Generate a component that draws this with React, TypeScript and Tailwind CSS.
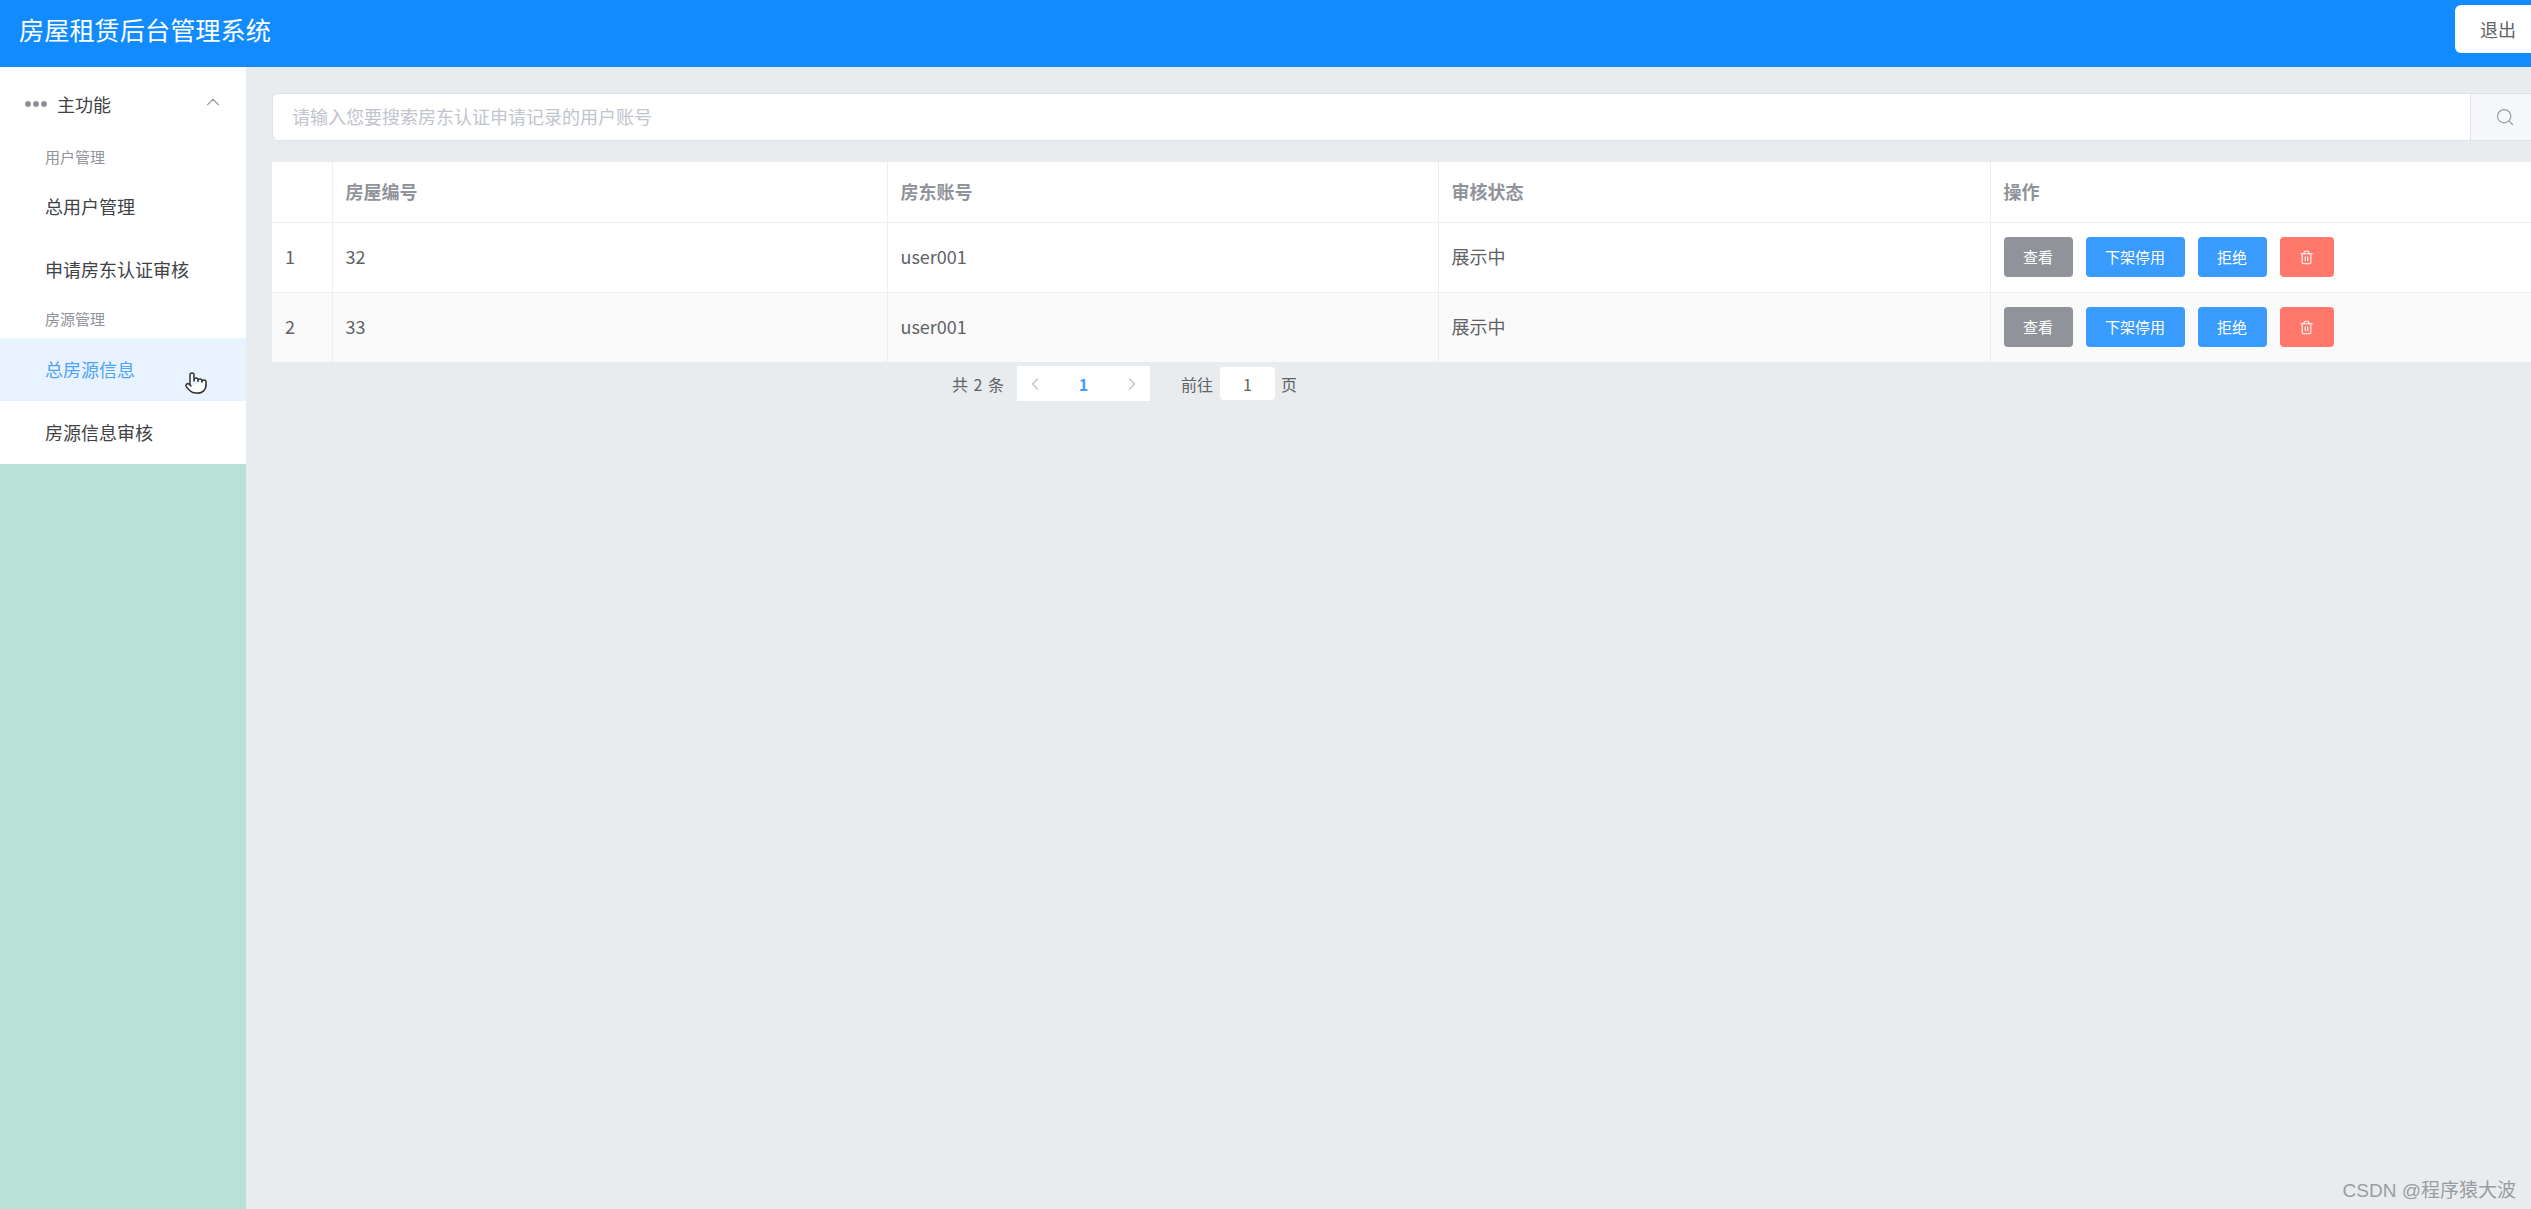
import { ChevronLeft, ChevronRight, ChevronUp, Pointer, Search, Trash2 } from "lucide-react";

const rows = [
    { index: 1, houseId: "32", account: "user001", status: "展示中", striped: false },
    { index: 2, houseId: "33", account: "user001", status: "展示中", striped: true },
];

const headers = ["", "房屋编号", "房东账号", "审核状态", "操作"];

const MenuGroupLabel = ({ label }: { label: string }) => (
    <div className="flex h-[36px] items-center pb-[2px] pl-[45px] text-[15px] text-[#909399]">{label}</div>
);

const MenuItem = ({ label, active, raised }: { label: string; active?: boolean; raised?: boolean }) => {
    if (active) {
        return (
            <div className="relative flex h-[63px] items-center bg-[#e8f3ff] pb-[1px] pl-[45px] text-[#4fa3f7]">
                {label}
                <Pointer
                    className="absolute left-[184px] top-[33px] size-[24px] fill-white text-[#333333]"
                    strokeWidth={1.5}
                />
            </div>
        );
    }

    return (
        <div
            className={
                raised
                    ? "flex h-[63px] items-center pb-[3px] pl-[45px] text-[#404246]"
                    : "flex h-[63px] items-center pb-[1px] pl-[45px] text-[#404246]"
            }
        >
            {label}
        </div>
    );
};

const Sidebar = () => (
    <aside className="flex w-[246px] shrink-0 flex-col bg-[#b7e2d5]">
        <div className="bg-white text-[18px]">
            <div className="flex h-[73px] items-center pt-[1px] pl-[25px] pr-[22px] text-[#404246]">
                <span className="flex w-[32px] gap-[2px]">
                    <span className="size-[6px] rounded-full bg-[#909399]" />
                    <span className="size-[6px] rounded-full bg-[#909399]" />
                    <span className="size-[6px] rounded-full bg-[#909399]" />
                </span>
                <span className="flex-1">主功能</span>
                <ChevronUp className="mb-[5px] size-[22px] text-[#9a9ca1]" strokeWidth={1.25} />
            </div>
            <MenuGroupLabel label="用户管理" />
            <MenuItem label="总用户管理" raised />
            <MenuItem label="申请房东认证审核" raised />
            <MenuGroupLabel label="房源管理" />
            <MenuItem label="总房源信息" active />
            <MenuItem label="房源信息审核" />
        </div>
    </aside>
);

const SearchBar = () => (
    <div className="-mr-[20px] flex h-[48px] rounded-l-[6px] border border-[#dfe2e8] bg-white text-[18px]">
        <div className="flex flex-1 items-center pb-[2px] pl-[19px] text-[#c0c4cc]">请输入您要搜索房东认证申请记录的用户账号</div>
        <div className="flex w-[80px] items-center border-l border-[#dfe3e8] bg-[#f5f7fa] pl-[24px]">
            <Search className="size-[20px] text-[#9b9ea5]" strokeWidth={1.5} />
        </div>
    </div>
);

const ActionButton = ({ label, className }: { label: string; className: string }) => (
    <button className={`flex h-[40px] items-center justify-center rounded-[4px] text-[15px] text-white ${className}`}>
        {label}
    </button>
);

const DataTable = () => (
    <table className="mt-[21px] w-full table-fixed border-collapse bg-white text-[18px]">
        <colgroup>
            <col className="w-[60px]" />
            <col className="w-[555px]" />
            <col className="w-[551px]" />
            <col className="w-[552px]" />
            <col />
        </colgroup>
        <thead>
            <tr className="h-[60px] border-b border-[#ebeef5]">
                {headers.map((header, i) => (
                    <th
                        key={i}
                        className="border-r border-[#ebeef5] pl-[13px] text-left font-bold text-[#909399] last:border-r-0"
                    >
                        {header}
                    </th>
                ))}
            </tr>
        </thead>
        <tbody>
            {rows.map((row) => (
                <tr
                    key={row.index}
                    className={
                        row.striped
                            ? "h-[70px] bg-[#fafafa] text-[#606266]"
                            : "h-[70px] border-b border-[#ebeef5] text-[#606266]"
                    }
                >
                    <td className="border-r border-[#ebeef5] pb-[1px] pl-[13px]">{row.index}</td>
                    <td className="border-r border-[#ebeef5] pb-[1px] pl-[13px]">{row.houseId}</td>
                    <td className="border-r border-[#ebeef5] pb-[1px] pl-[13px]">{row.account}</td>
                    <td className="border-r border-[#ebeef5] pb-[1px] pl-[13px]">{row.status}</td>
                    <td className="pl-[13px]">
                        <div className="flex gap-[13px]">
                            <ActionButton label="查看" className="w-[69px] bg-[#909399]" />
                            <ActionButton label="下架停用" className="w-[99px] bg-[#3a9bff]" />
                            <ActionButton label="拒绝" className="w-[69px] bg-[#3a9bff]" />
                            <button className="flex h-[40px] w-[54px] items-center justify-center rounded-[4px] bg-[#ff786b] text-white">
                                <Trash2 className="size-[15px]" strokeWidth={1.75} />
                            </button>
                        </div>
                    </td>
                </tr>
            ))}
        </tbody>
    </table>
);

const Pagination = () => (
    <div className="mt-[4px] flex h-[35px] items-center pl-[680px] text-[16px] text-[#606266]">
        <span className="w-[65px] [word-spacing:2px]">共 2 条</span>
        <div className="flex h-[35px] w-[133px] items-center justify-between bg-white px-[8px]">
            <ChevronLeft className="size-[20px] text-[#c0c4cc]" strokeWidth={1.75} />
            <span className="font-bold text-[#409eff]">1</span>
            <ChevronRight className="size-[20px] text-[#c0c4cc]" strokeWidth={1.75} />
        </div>
        <span className="ml-[31px]">前往</span>
        <div className="ml-[7px] flex h-[33px] w-[55px] items-center justify-center rounded-[4px] bg-white">1</div>
        <span className="ml-[6px]">页</span>
    </div>
);

const App = () => {
    return (
        <div className="relative flex h-[1209px] w-[2531px] flex-col overflow-hidden bg-[#e8ecef] font-['Noto_Sans_CJK_SC','Noto_Sans',sans-serif]">
            <header className="flex h-[67px] shrink-0 items-start justify-between bg-[#128bff]">
                <h1 className="ml-[19px] mt-[11px] text-[25.2px] leading-[36px] text-white">房屋租赁后台管理系统</h1>
                <button className="mt-[5px] h-[48px] w-[76px] rounded-l-[6px] bg-white pl-[25px] text-left text-[18px] text-[#606266]">
                    退出
                </button>
            </header>
            <div className="flex flex-1">
                <Sidebar />
                <main className="min-w-0 flex-1 pl-[26px] pt-[26px]">
                    <SearchBar />
                    <DataTable />
                    <Pagination />
                </main>
            </div>
            <span className="absolute bottom-[4px] right-[15px] font-['Liberation_Sans','Noto_Sans_CJK_SC',sans-serif] text-[19px] text-[#9a9ca0]">
                CSDN @程序猿大波
            </span>
        </div>
    );
};

export default App;
